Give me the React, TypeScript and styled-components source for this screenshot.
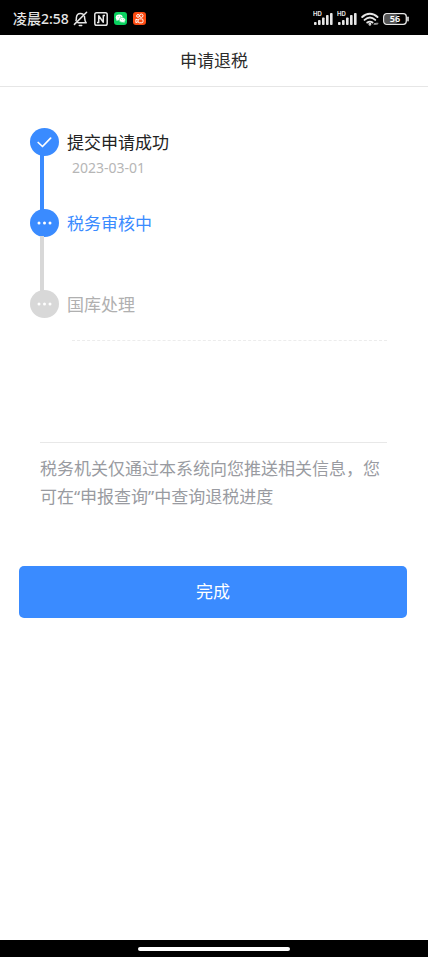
import React from "react";
import styled, { createGlobalStyle } from "styled-components";

const BLUE = "#3a8bff";
const GREY = "#d8d8d8";

const GlobalStyle = createGlobalStyle`
  *, *::before, *::after { box-sizing: border-box; }
  body {
    margin: 0;
    background: #fff;
    font-family: "Noto Sans", "Noto Sans CJK SC", sans-serif;
  }
`;

const Screen = styled.div`
  display: flex;
  flex-direction: column;
  min-height: 100vh;
  padding: 0 2px 2px 0;
  background: #fff;
`;

const StatusBar = styled.div`
  display: flex;
  align-items: center;
  justify-content: space-between;
  height: 35px;
  padding: 2px 18px 0 13px;
  background: #000;
  color: #e6e6e6;
`;

const StatusGroup = styled.div<{ $gap: number }>`
  display: flex;
  align-items: center;
  gap: ${(p) => p.$gap}px;
`;

const Clock = styled.span`
  font-size: 14px;
  line-height: 20px;
  font-weight: 500;
  white-space: nowrap;
  margin-right: -2px;
`;

const Header = styled.header`
  display: flex;
  align-items: center;
  justify-content: center;
  height: 52px;
  border-bottom: 1px solid #e6e6e6;
`;

const Title = styled.h1`
  margin: 0;
  font-size: 17px;
  line-height: 28px;
  font-weight: 400;
  color: #2b2b2b;
`;

const Main = styled.main`
  flex: 1;
  padding: 41px 21px 40px 19px;
`;

const Steps = styled.ol`
  list-style: none;
  margin: 0;
  padding: 0 0 0 11px;
`;

const Step = styled.li`
  display: grid;
  grid-template-columns: 29px 1fr;
  column-gap: 8px;
  min-height: 81px;

  &:last-child {
    min-height: 50px;
  }
`;

const Rail = styled.div`
  display: flex;
  flex-direction: column;
`;

const Dot = styled.span<{ $color: string }>`
  display: flex;
  align-items: center;
  justify-content: center;
  width: 29px;
  height: 28px;
  border-radius: 50%;
  background: ${(p) => p.$color};
`;

const Connector = styled.span<{ $color: string }>`
  flex: 1;
  width: 4px;
  margin: -1px 0 -1px 10px;
  background: ${(p) => p.$color};
`;

const StepName = styled.div<{ $color: string }>`
  font-size: 17px;
  line-height: 29px;
  color: ${(p) => p.$color};
`;

const StepDate = styled.time`
  display: block;
  padding-left: 5px;
  font-size: 14px;
  line-height: 21px;
  color: #b6b6b6;
`;

const DottedRule = styled.hr`
  margin: 0 20px 101px 53px;
  border: 0;
  border-top: 1px dashed #ececec;
`;

const Notice = styled.p`
  margin: 0 20px 0 21px;
  padding-top: 12px;
  border-top: 1px solid #e8e8e8;
  font-size: 17px;
  line-height: 28px;
  color: #999ba1;
`;

const DoneButton = styled.button`
  display: block;
  width: 100%;
  height: 52px;
  margin-top: 55px;
  padding: 0;
  border: 0;
  border-radius: 5px;
  background: ${BLUE};
  color: #fff;
  font: inherit;
  font-size: 17px;
  line-height: 28px;
  cursor: pointer;
`;

const HomeBar = styled.div`
  display: flex;
  align-items: center;
  justify-content: center;
  height: 17px;
  background: #000;
`;

const HomePill = styled.span`
  width: 152px;
  height: 4px;
  border-radius: 2px;
  background: #fff;
`;

const BellOff = () => (
  <svg width="15" height="16" viewBox="0 0 15 16" fill="none" stroke="#e6e6e6" strokeWidth="1.5" strokeLinecap="round" strokeLinejoin="round">
    <path d="M3 9.500C3.500 8.500 3.300 7.500 3.400 6.500C3.600 4 5.200 2.400 7.500 2.400c1 0 1.800.3 2.500.8M11.500 5.500c.3 2.500 0 4.500 1.700 6.300H5M6.300 14.500h2.400M13.600 1.200L1.400 13.400" />
  </svg>
);

const Nfc = () => (
  <svg width="14" height="14" viewBox="0 0 14 14" fill="none" stroke="#e6e6e6" strokeWidth="1.5" strokeLinejoin="round">
    <rect x=".8" y=".8" width="12.400" height="12.400" rx="1.800" />
    <path d="M3 10.600H4.700V3.700L9.300 10.200V3.400H11" />
  </svg>
);

const WeChat = () => (
  <svg width="13" height="13" viewBox="0 0 13 13">
    <rect width="13" height="13" rx="3" fill="#09d15f" />
    <path d="M2.600 7L2.500 9l1.700-1z" fill="#fff" />
    <ellipse cx="5.200" cy="5.400" rx="3.500" ry="2.900" fill="#fff" />
    <ellipse cx="8.300" cy="7.900" rx="3.100" ry="2.500" fill="#fff" stroke="#09d15f" strokeWidth=".5" />
    <path d="M9 9.900l1.500.9-.2-1.500z" fill="#fff" />
    <g fill="#09d15f">
      <circle cx="4.100" cy="4.700" r=".45" />
      <circle cx="6.300" cy="4.700" r=".45" />
      <circle cx="7.300" cy="7.300" r=".4" />
      <circle cx="9.300" cy="7.300" r=".4" />
    </g>
  </svg>
);

const Kuaishou = () => (
  <svg width="13" height="13" viewBox="0 0 13 13">
    <rect width="13" height="13" rx="3" fill="#fb4a10" />
    <g fill="none" stroke="#fff" strokeWidth="1">
      <circle cx="5" cy="3.900" r="1.400" />
      <circle cx="8.300" cy="3.700" r="1.700" />
      <rect x="5.200" y="6.900" width="4.800" height="3.900" rx="1.200" />
      <path d="M5 8L2.900 7.200v3.400L5 9.700" strokeLinejoin="round" />
    </g>
  </svg>
);

const Signal = () => (
  <svg width="20" height="15" viewBox="0 0 20 15" fill="#e6e6e6">
    <text x="0" y="5" fontSize="6" fontWeight="700" fontFamily="Inter, sans-serif">HD</text>
    <rect x="1" y="11" width="2.600" height="3" rx=".8" />
    <rect x="5" y="9" width="2.600" height="5" rx=".8" />
    <rect x="9" y="6.500" width="2.600" height="7.500" rx=".8" />
    <rect x="13" y="4" width="2.600" height="10" rx=".8" />
    <rect x="17" y="2" width="2.600" height="12" rx=".8" />
  </svg>
);

const Wifi = () => (
  <svg width="18" height="14" viewBox="0 0 18 14" fill="none" stroke="#e6e6e6" strokeWidth="1.900" strokeLinecap="round">
    <path d="M1.200 5C5.500.6 12.200.6 16.500 5M3.600 7.900C7 4.800 10.900 4.800 14.200 7.900M6.300 10.600c1.700-1.300 3.500-1.300 5.200 0" />
    <circle cx="8.900" cy="12.300" r=".5" fill="#e6e6e6" />
    <path d="M13 12.200l1-1.200 1 1.200zM15 11.400l1 1.200 1-1.200z" fill="#e6e6e6" strokeWidth=".4" />
  </svg>
);

const Battery = () => (
  <svg width="27" height="12" viewBox="0 0 27 12">
    <rect x="1.500" y="1.500" width="13" height="9" rx="2" fill="#555" />
    <rect x=".7" y=".7" width="22.600" height="10.600" rx="3" fill="none" stroke="#e6e6e6" strokeWidth="1.300" />
    <path d="M25 4.200v3.600" stroke="#e6e6e6" strokeWidth="1.600" strokeLinecap="round" />
    <text x="12" y="9.200" textAnchor="middle" fill="#fff" fontSize="9" fontWeight="600" fontFamily="Noto Sans, sans-serif">56</text>
  </svg>
);

const Check = () => (
  <svg width="15" height="11" viewBox="0 0 15 11" fill="none" stroke="#fff" strokeWidth="1.700" strokeLinecap="round" strokeLinejoin="round">
    <path d="M1.200 5.500L5.500 9.500L13.600 1.200" />
  </svg>
);

const Ellipsis = () => (
  <svg width="15" height="4" viewBox="0 0 15 4" fill="#fff">
    <circle cx="2" cy="2" r="1.500" />
    <circle cx="7.500" cy="2" r="1.500" />
    <circle cx="13" cy="2" r="1.500" />
  </svg>
);

type StepData = {
  name: string;
  date?: string;
  done?: boolean;
  dot: string;
  line?: string;
  text: string;
};

const steps: StepData[] = [
  { name: "提交申请成功", date: "2023-03-01", done: true, dot: BLUE, line: BLUE, text: "#222" },
  { name: "税务审核中", dot: BLUE, line: GREY, text: BLUE },
  { name: "国库处理", dot: GREY, text: "#b0b0b0" },
];

export default function App() {
  return (
    <Screen>
      <GlobalStyle />
      <StatusBar>
        <StatusGroup $gap={6}>
          <Clock>凌晨2:58</Clock>
          <BellOff />
          <Nfc />
          <WeChat />
          <Kuaishou />
        </StatusGroup>
        <StatusGroup $gap={4}>
          <Signal />
          <Signal />
          <Wifi />
          <Battery />
        </StatusGroup>
      </StatusBar>
      <Header>
        <Title>申请退税</Title>
      </Header>
      <Main>
        <Steps>
          {steps.map((s) => (
            <Step key={s.name}>
              <Rail>
                <Dot $color={s.dot}>{s.done ? <Check /> : <Ellipsis />}</Dot>
                {s.line && <Connector $color={s.line} />}
              </Rail>
              <div>
                <StepName $color={s.text}>{s.name}</StepName>
                {s.date && <StepDate dateTime={s.date}>{s.date}</StepDate>}
              </div>
            </Step>
          ))}
        </Steps>
        <DottedRule />
        <Notice>税务机关仅通过本系统向您推送相关信息，您可在“申报查询”中查询退税进度</Notice>
        <DoneButton type="button">完成</DoneButton>
      </Main>
      <HomeBar>
        <HomePill />
      </HomeBar>
    </Screen>
  );
}
